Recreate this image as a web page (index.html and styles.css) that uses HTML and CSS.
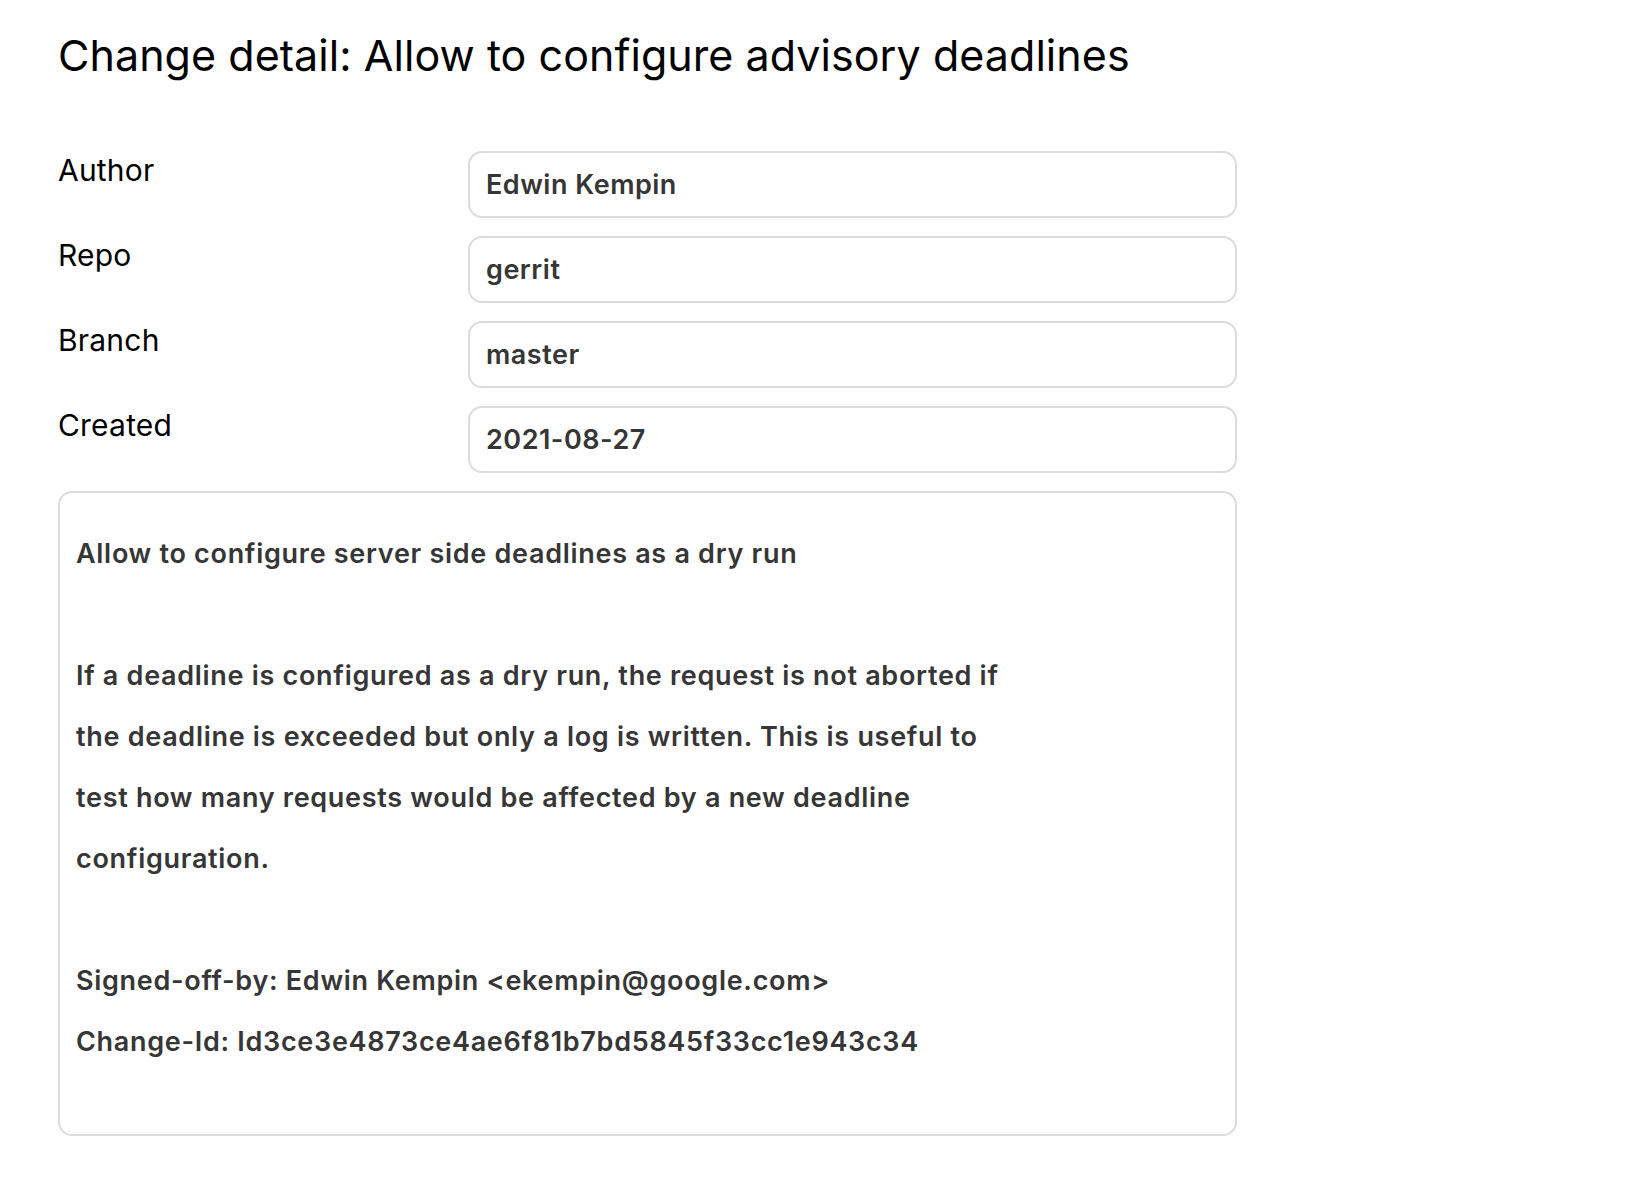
FILE: index.html
```html
<!DOCTYPE html>
<html>
<head>
<meta charset="utf-8">
<link rel="stylesheet" href="styles.css">
</head>
<body>
<main class="page">
  <h1 class="title">Change detail: Allow to configure advisory deadlines</h1>
  <div class="fields">
    <div class="label">Author</div>
    <div class="value">Edwin Kempin</div>
    <div class="label">Repo</div>
    <div class="value">gerrit</div>
    <div class="label">Branch</div>
    <div class="value">master</div>
    <div class="label">Created</div>
    <div class="value">2021-08-27</div>
  </div>
  <div class="message">Allow to configure server side deadlines as a dry run

If a deadline is configured as a dry run, the request is not aborted if
the deadline is exceeded but only a log is written. This is useful to
test how many requests would be affected by a new deadline
configuration.

Signed-off-by: Edwin Kempin &lt;ekempin@google.com&gt;
Change-Id: Id3ce3e4873ce4ae6f81b7bd5845f33cc1e943c34</div>
</main>
</body>
</html>
```

FILE: styles.css
```css
html, body {
  margin: 0;
  padding: 0;
  background: #ffffff;
}

.page {
  font-family: Inter, "Noto Sans", sans-serif;
  padding: 0 0 0 58px;
  width: 1179px;
}

.title {
  margin: 0;
  padding-top: 29px;
  font-size: 43px;
  font-weight: 400;
  letter-spacing: 0.05px;
  line-height: 52px;
  color: #000;
  height: 151px;
  box-sizing: border-box;
}

.fields {
  display: grid;
  grid-template-columns: 410px 1fr;
  row-gap: 18px;
}

.label {
  font-size: 30px;
  letter-spacing: 0.2px;
  color: #000;
  padding-top: 1px;
  line-height: 36px;
}

.value {
  height: 67px;
  box-sizing: border-box;
  border: 2px solid #dcdcdc;
  border-radius: 14px;
  padding: 0 16px;
  display: flex;
  align-items: center;
  font-size: 27px;
  font-weight: 600;
  letter-spacing: 0.5px;
  color: #363636;
}

.message {
  margin-top: 18px;
  border: 2px solid #dcdcdc;
  border-radius: 14px;
  padding: 30px 16px 62px;
  white-space: pre-wrap;
  font-size: 27px;
  font-weight: 600;
  letter-spacing: 0.7px;
  line-height: 61px;
  color: #363636;
}
```
